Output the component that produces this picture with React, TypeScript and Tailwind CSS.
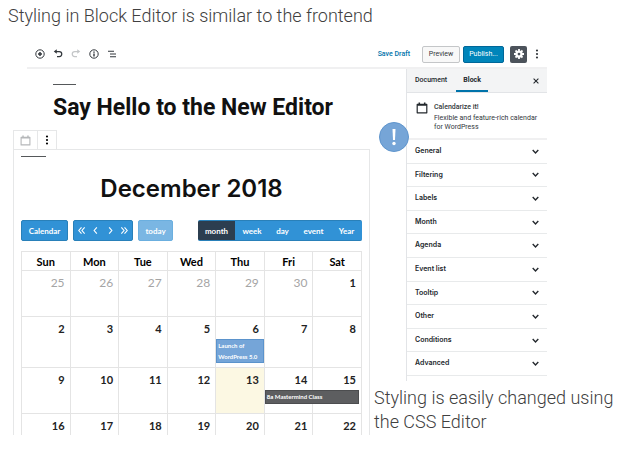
import React from 'react';

type CalendarEvent = {
  title: string;
  time?: string;
  className: string;
};

const PANELS = [
  'General',
  'Filtering',
  'Labels',
  'Month',
  'Agenda',
  'Event list',
  'Tooltip',
  'Other',
  'Conditions',
  'Advanced',
];

const DAYS = ['Sun', 'Mon', 'Tue', 'Wed', 'Thu', 'Fri', 'Sat'];

const WEEKS = [
  { height: 'h-[46px]', days: [25, 26, 27, 28, 29, 30, 1] },
  { height: 'h-[51px]', days: [2, 3, 4, 5, 6, 7, 8] },
  { height: 'h-[46px]', days: [9, 10, 11, 12, 13, 14, 15] },
  { height: 'h-[21px]', days: [16, 17, 18, 19, 20, 21, 22] },
];

const EVENTS: Record<number, CalendarEvent> = {
  6: {
    title: 'Launch of WordPress 5.0',
    className: 'w-full h-6 border border-[#5b93cc] bg-[#75a5d8] px-px leading-[11px]',
  },
  14: {
    title: 'Mastermind Class',
    time: '8a',
    className: 'w-[calc(200%-1px)] h-[14px] border border-[#4c4d4f] bg-[#5d5e60] px-px leading-[12px] whitespace-nowrap',
  },
};

const VIEWS = [
  { name: 'month', className: 'w-[37px] bg-[#2c3e50]' },
  { name: 'week', className: 'w-[34px]' },
  { name: 'day', className: 'w-[27px]' },
  { name: 'event', className: 'w-[35px]' },
  { name: 'Year', className: 'w-[31px]' },
];

function Icon({ children, className = 'size-[10px]' }: { children: React.ReactNode; className?: string }) {
  return (
    <svg
      viewBox="0 0 20 20"
      className={className}
      fill="none"
      stroke="currentColor"
      strokeWidth="2"
      aria-hidden="true"
    >
      {children}
    </svg>
  );
}

function CalendarIcon({ className }: { className?: string }) {
  return (
    <Icon className={className}>
      <path d="M2 4h16v14H2z" strokeLinejoin="round" />
      <path d="M2 5h16M5.5 1v4M14.5 1v4" strokeWidth="2.6" />
    </Icon>
  );
}

function DotsIcon() {
  return (
    <svg viewBox="0 0 4 12" className="h-[10px] w-1" fill="currentColor" aria-hidden="true">
      <circle cx="2" cy="1.8" r="1.3" />
      <circle cx="2" cy="6" r="1.3" />
      <circle cx="2" cy="10.2" r="1.3" />
    </svg>
  );
}

function Toolbar() {
  return (
    <header className="ml-[27px] mr-[74px] flex h-7 items-center border-b-2 border-[#f0f0f1] pl-2 pr-2 text-[#32373c]">
      <div className="flex gap-2">
        <button type="button" aria-label="Add block">
          <Icon>
            <circle cx="10" cy="10" r="8.4" />
            <path d="M10 6v8M6 10h8" strokeWidth="3" />
          </Icon>
        </button>
        <button type="button" aria-label="Undo">
          <Icon>
            <path d="M6 5h6.5a4.8 4.8 0 0 1 0 10H8" strokeWidth="2.5" />
            <path d="M7.5 .5v9L1.5 5z" fill="currentColor" stroke="none" />
          </Icon>
        </button>
        <button type="button" aria-label="Redo" className="text-[#c4c6c8]">
          <Icon>
            <path d="M14 5H7.5a4.8 4.8 0 0 0 0 10H12" strokeWidth="2.5" />
            <path d="M12.5 .5v9l6-4.5z" fill="currentColor" stroke="none" />
          </Icon>
        </button>
        <button type="button" aria-label="Content structure">
          <Icon>
            <circle cx="10" cy="10" r="8.4" />
            <path d="M10 9v6M10 5v2.5" strokeWidth="2.8" />
          </Icon>
        </button>
        <button type="button" aria-label="Block navigation">
          <Icon>
            <path d="M2 4.5h12M6 10h12M6 15.5h12" />
          </Icon>
        </button>
      </div>
      <div className="ml-auto flex items-center font-['Roboto',sans-serif] text-[7px]">
        <button type="button" className="mr-3 font-medium text-[#0073aa]">
          Save Draft
        </button>
        <button type="button" className="h-[17px] w-[38px] rounded-xs border border-[#c4c6c8] bg-[#f8f8f8]">
          Preview
        </button>
        <button
          type="button"
          className="ml-[3px] h-[17px] w-[41px] rounded-xs border border-[#006799] bg-[#0085ba] text-white"
        >
          Publish...
        </button>
        <button
          type="button"
          aria-label="Settings"
          className="ml-[6px] flex size-[17px] items-center justify-center rounded-xs bg-[#4c535b] text-white"
        >
          <Icon>
            <circle cx="10" cy="10" r="5" strokeWidth="4.5" />
            <path
              d="M10 0v4M10 16v4M0 10h4M16 10h4M3 3l2.8 2.8M14.2 14.2L17 17M17 3l-2.8 2.8M5.8 14.2L3 17"
              strokeWidth="3.6"
            />
          </Icon>
        </button>
        <button type="button" aria-label="More" className="ml-2">
          <DotsIcon />
        </button>
      </div>
    </header>
  );
}

function CalendarControls() {
  return (
    <div className="flex h-[21px] text-[8px] font-bold text-white">
      <button type="button" className="w-[47px] rounded-xs border border-[#2980b9] bg-[#3192d6]">
        Calendar
      </button>
      <div className="ml-[5px] flex w-[60px] rounded-xs border border-[#2980b9] bg-[#3192d6]">
        {[
          { label: 'Previous year', d: 'M10 3l-6 7 6 7M17 3l-6 7 6 7' },
          { label: 'Previous', d: 'M13 3l-6 7 6 7' },
          { label: 'Next', d: 'M7 3l6 7-6 7' },
          { label: 'Next year', d: 'M3 3l6 7-6 7M10 3l6 7-6 7' },
        ].map((nav) => (
          <button
            key={nav.label}
            type="button"
            aria-label={nav.label}
            className="flex flex-1 items-center justify-center"
          >
            <Icon className="size-[9px]">
              <path d={nav.d} strokeWidth="2.5" />
            </Icon>
          </button>
        ))}
      </div>
      <button type="button" className="ml-[5px] w-[35px] rounded-xs border border-[#6bafdf] bg-[#7ab6e3]">
        today
      </button>
      <div className="ml-auto flex overflow-hidden rounded-xs border-y border-[#2980b9] bg-[#3192d6]">
        {VIEWS.map((view) => (
          <button key={view.name} type="button" className={view.className}>
            {view.name}
          </button>
        ))}
      </div>
    </div>
  );
}

function MonthTable() {
  return (
    <table className="mt-[10px] w-full table-fixed border-collapse text-[#222]">
      <thead>
        <tr className="h-[19px]">
          {DAYS.map((day) => (
            <th key={day} className="border border-[#e4e4e4] p-0 text-[11px] leading-none font-bold text-black">
              {day}
            </th>
          ))}
        </tr>
      </thead>
      <tbody>
        {WEEKS.map((week, row) => (
          <tr key={row} className={week.height}>
            {week.days.map((day) => {
              const event = EVENTS[day];
              const outside = row === 0 && day > 7;

              return (
                <td
                  key={day}
                  className={`border-x border-[#e4e4e4] p-0 align-top ${row < 3 ? 'border-b' : ''} ${
                    day === 13 ? 'bg-[#fcf8e3]' : ''
                  }`}
                >
                  <div className="relative">
                    <p
                      className={`pt-1 pr-[5px] text-right leading-4 ${
                        outside ? 'text-[12px] text-[#a5a5a5]' : 'text-[11px] font-bold'
                      }`}
                    >
                      {day}
                    </p>
                    {event && (
                      <div className={`absolute top-[22px] left-0 text-[6px] font-bold text-white ${event.className}`}>
                        {event.time && <b>{event.time} </b>}
                        {event.title}
                      </div>
                    )}
                  </div>
                </td>
              );
            })}
          </tr>
        ))}
      </tbody>
    </table>
  );
}

function Sidebar() {
  return (
    <aside className="relative mr-[74px] ml-9 border-l border-[#e2e4e7] pb-[5px] text-[7px] text-[#23282d]">
      <div className="flex h-6 items-stretch border-b border-[#e2e4e7] bg-[#f3f4f5] pl-2 font-['Roboto',sans-serif]">
        <button type="button" className="font-medium">
          Document
        </button>
        <button
          type="button"
          className="ml-[9px] w-8 border-y-2 border-t-transparent border-b-[#0073aa] font-bold"
        >
          Block
        </button>
        <button type="button" aria-label="Close settings" className="mr-2 ml-auto">
          <Icon className="size-[6px]">
            <path d="M2 2l16 16M18 2L2 18" strokeWidth="3.5" />
          </Icon>
        </button>
      </div>
      <div className="flex h-[47px] gap-[6px] border-b-2 border-[#f0f0f1] pt-[9px] pl-[9px]">
        <CalendarIcon className="size-3 shrink-0" />
        <div className="font-['Roboto',sans-serif] text-[#32373c]">
          <h2 className="leading-[10px] font-medium">Calendarize it!</h2>
          <p className="mt-[2px] leading-[9px]">Flexible and feature-rich calendar for WordPress</p>
        </div>
      </div>
      <div className="flex h-59 flex-col">
        {PANELS.map((panel) => (
          <button
            key={panel}
            type="button"
            className="flex flex-1 items-center justify-between border-b border-[#e8eaeb] pr-2 pl-2 font-semibold"
          >
            {panel}
            <Icon className="size-[7px]">
              <path d="M2 6l8 8 8-8" strokeWidth="4" />
            </Icon>
          </button>
        ))}
      </div>
      <span className="absolute top-[53px] -left-7 flex size-[30px] items-center justify-center rounded-full border border-[#5f95cd] bg-[#76a5d7]">
        <svg viewBox="0 0 6 18" className="h-[18px] w-[6px]" fill="white" aria-hidden="true">
          <path d="M1.5 1h3l-.5 11h-2z" />
          <circle cx="3" cy="15.5" r="1.7" />
        </svg>
      </span>
    </aside>
  );
}

export default function App() {
  return (
    <div className="bg-white pb-4 font-['Inter',sans-serif]">
      <h1 className="flex h-[41px] items-start pt-1 pl-2 font-['Roboto',sans-serif] text-[18px] leading-6 font-light text-[#404040]">
        Styling in Block Editor is similar to the frontend
      </h1>
      <Toolbar />
      <div className="flex">
        <main className="min-w-0 flex-1 pl-[13px]">
          <div className="pt-[15px] pl-10">
            <hr className="w-[23px] border-t border-[#55585a]" />
            <h2 className="mt-2 font-['Roboto',sans-serif] text-[23px] leading-[30px] font-bold whitespace-nowrap text-[#111]">
              Say Hello to the New Editor
            </h2>
          </div>
          <div className="mt-[7px] flex h-[19px] w-11 border border-b-0 border-[#e6e7e8]">
            <button
              type="button"
              aria-label="Change block type"
              className="flex flex-1 items-center justify-center border-r border-[#e6e7e8] text-[#b5b7b9]"
            >
              <CalendarIcon className="size-[11px]" />
            </button>
            <button type="button" aria-label="Block options" className="flex w-[18px] items-center justify-center">
              <DotsIcon />
            </button>
          </div>
          <section className="border border-b-0 border-[#e6e7e8] px-[7px] pt-[6px] font-['Lato',sans-serif]">
            <hr className="w-[25px] border-t border-[#55585a]" />
            <h2 className="mt-[17px] mb-4 text-center font-['Inter',sans-serif] text-[24px] leading-[30px] font-semibold text-[#111]">
              December 2018
            </h2>
            <CalendarControls />
            <MonthTable />
          </section>
        </main>
        <div className="w-[251px] shrink-0">
          <Sidebar />
          <p className="mt-[5px] pl-1 font-['Roboto',sans-serif] text-[18px] leading-6 font-light text-[#404040]">
            Styling is easily changed using the CSS Editor
          </p>
        </div>
      </div>
    </div>
  );
}
